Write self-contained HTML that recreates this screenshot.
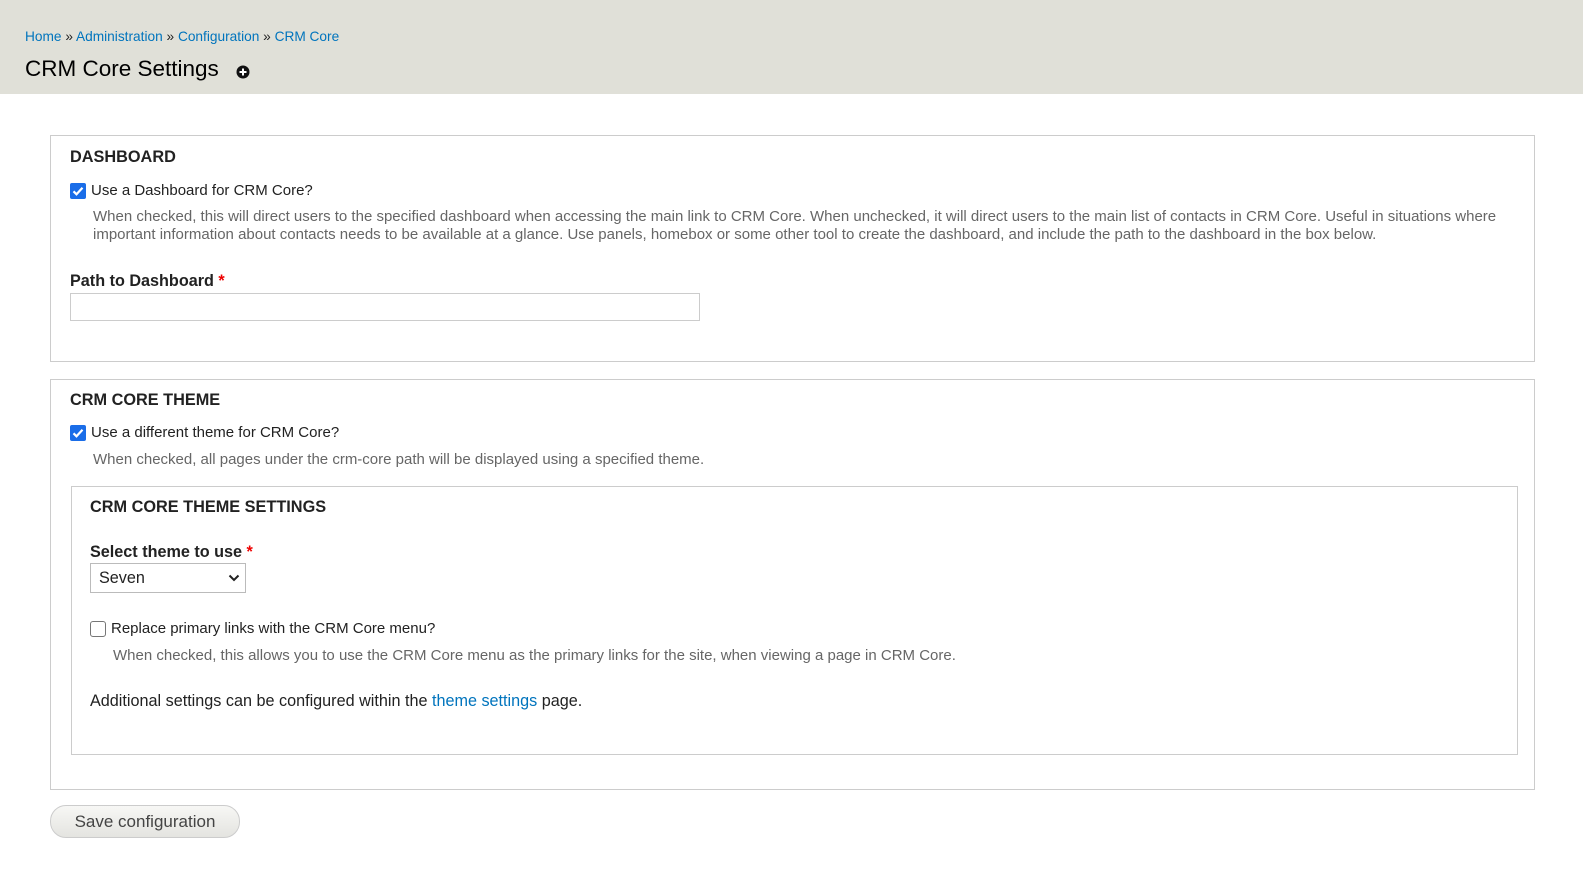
<!DOCTYPE html>
<html><head><meta charset="utf-8"><style>
body{margin:0;width:1583px;height:895px;background:#fff;font-family:"Liberation Sans",sans-serif;color:#333;position:relative;overflow:hidden}
.a{position:absolute;white-space:nowrap}
a{color:#0074bd;text-decoration:none}
.hdr{position:absolute;left:0;top:0;width:1583px;height:94px;background:#e0e0d8}
.fs{position:absolute;border:1px solid #ccc;box-sizing:border-box}
.lg{font-weight:bold;font-size:16.3px;color:#222}
.lbl{font-size:15px;color:#222}
.desc{font-size:15px;color:#666;line-height:18px}
.bl{font-weight:bold;font-size:16.2px;color:#222}
.req{color:#e00}
</style></head><body>
<div class="hdr"></div>
<div class="a" style="left:25px;top:29px;font-size:13.7px;color:#222"><a>Home</a> » <a>Administration</a> » <a>Configuration</a> » <a>CRM Core</a></div>
<div class="a" style="left:25px;top:56px;font-size:22.5px;color:#000">CRM Core Settings</div>
<svg class="a" style="left:236px;top:65px" width="14" height="14" viewBox="0 0 14 14"><circle cx="7" cy="7" r="6.5" fill="#111"/><path d="M7 3.5v7M3.5 7h7" stroke="#fff" stroke-width="2"/></svg>

<div class="fs" style="left:50px;top:135px;width:1485px;height:227px"></div>
<div class="a lg" style="left:70px;top:148px">DASHBOARD</div>
<svg class="a" style="left:70px;top:183px" width="16" height="16" viewBox="0 0 16 16"><rect width="16" height="16" rx="2" fill="#1a6de8"/><path d="M3.5 8.3l3 3 6-6.5" stroke="#fff" stroke-width="2.2" fill="none"/></svg>
<div class="a lbl" style="left:91px;top:182px">Use a Dashboard for CRM Core?</div>
<div class="a desc" style="left:93px;top:208px">When checked, this will direct users to the specified dashboard when accessing the main link to CRM Core. When unchecked, it will direct users to the main list of contacts in CRM Core. Useful in situations where<br>important information about contacts needs to be available at a glance. Use panels, homebox or some other tool to create the dashboard, and include the path to the dashboard in the box below.</div>
<div class="a bl" style="left:70px;top:272px">Path to Dashboard <span class="req">*</span></div>
<div class="a" style="left:70px;top:293px;width:630px;height:28px;border:1px solid #ccc;box-sizing:border-box"></div>

<div class="fs" style="left:50px;top:379px;width:1485px;height:411px"></div>
<div class="a lg" style="left:70px;top:391px">CRM CORE THEME</div>
<svg class="a" style="left:70px;top:425px" width="16" height="16" viewBox="0 0 16 16"><rect width="16" height="16" rx="2" fill="#1a6de8"/><path d="M3.5 8.3l3 3 6-6.5" stroke="#fff" stroke-width="2.2" fill="none"/></svg>
<div class="a lbl" style="left:91px;top:424px">Use a different theme for CRM Core?</div>
<div class="a desc" style="left:93px;top:451px">When checked, all pages under the crm-core path will be displayed using a specified theme.</div>

<div class="fs" style="left:71px;top:486px;width:1447px;height:269px"></div>
<div class="a lg" style="left:90px;top:498px">CRM CORE THEME SETTINGS</div>
<div class="a bl" style="left:90px;top:543px">Select theme to use <span class="req">*</span></div>
<div class="a" style="left:90px;top:563px;width:156px;height:30px;border:1px solid #bbb;box-sizing:border-box;font-size:16.2px;color:#222;padding:5px 0 0 8px">Seven</div>
<svg class="a" style="left:228px;top:573px" width="12" height="10" viewBox="0 0 12 10"><path d="M1.5 2.5l4.5 4.5 4.5-4.5" stroke="#222" stroke-width="2" fill="none"/></svg>
<div class="a" style="left:90px;top:621px;width:16px;height:16px;border:1px solid #767676;border-radius:3px;box-sizing:border-box"></div>
<div class="a lbl" style="left:111px;top:620px">Replace primary links with the CRM Core menu?</div>
<div class="a desc" style="left:113px;top:647px">When checked, this allows you to use the CRM Core menu as the primary links for the site, when viewing a page in CRM Core.</div>
<div class="a" style="left:90px;top:692px;font-size:16.2px;color:#222">Additional settings can be configured within the <a>theme settings</a> page.</div>

<div class="a" style="left:50px;top:805px;width:190px;height:33px;border:1px solid #ccc;border-radius:16px;box-sizing:border-box;background:linear-gradient(#f7f7f5,#e4e4e0);font-size:17px;color:#444;text-align:center;line-height:31px">Save configuration</div>
</body></html>
